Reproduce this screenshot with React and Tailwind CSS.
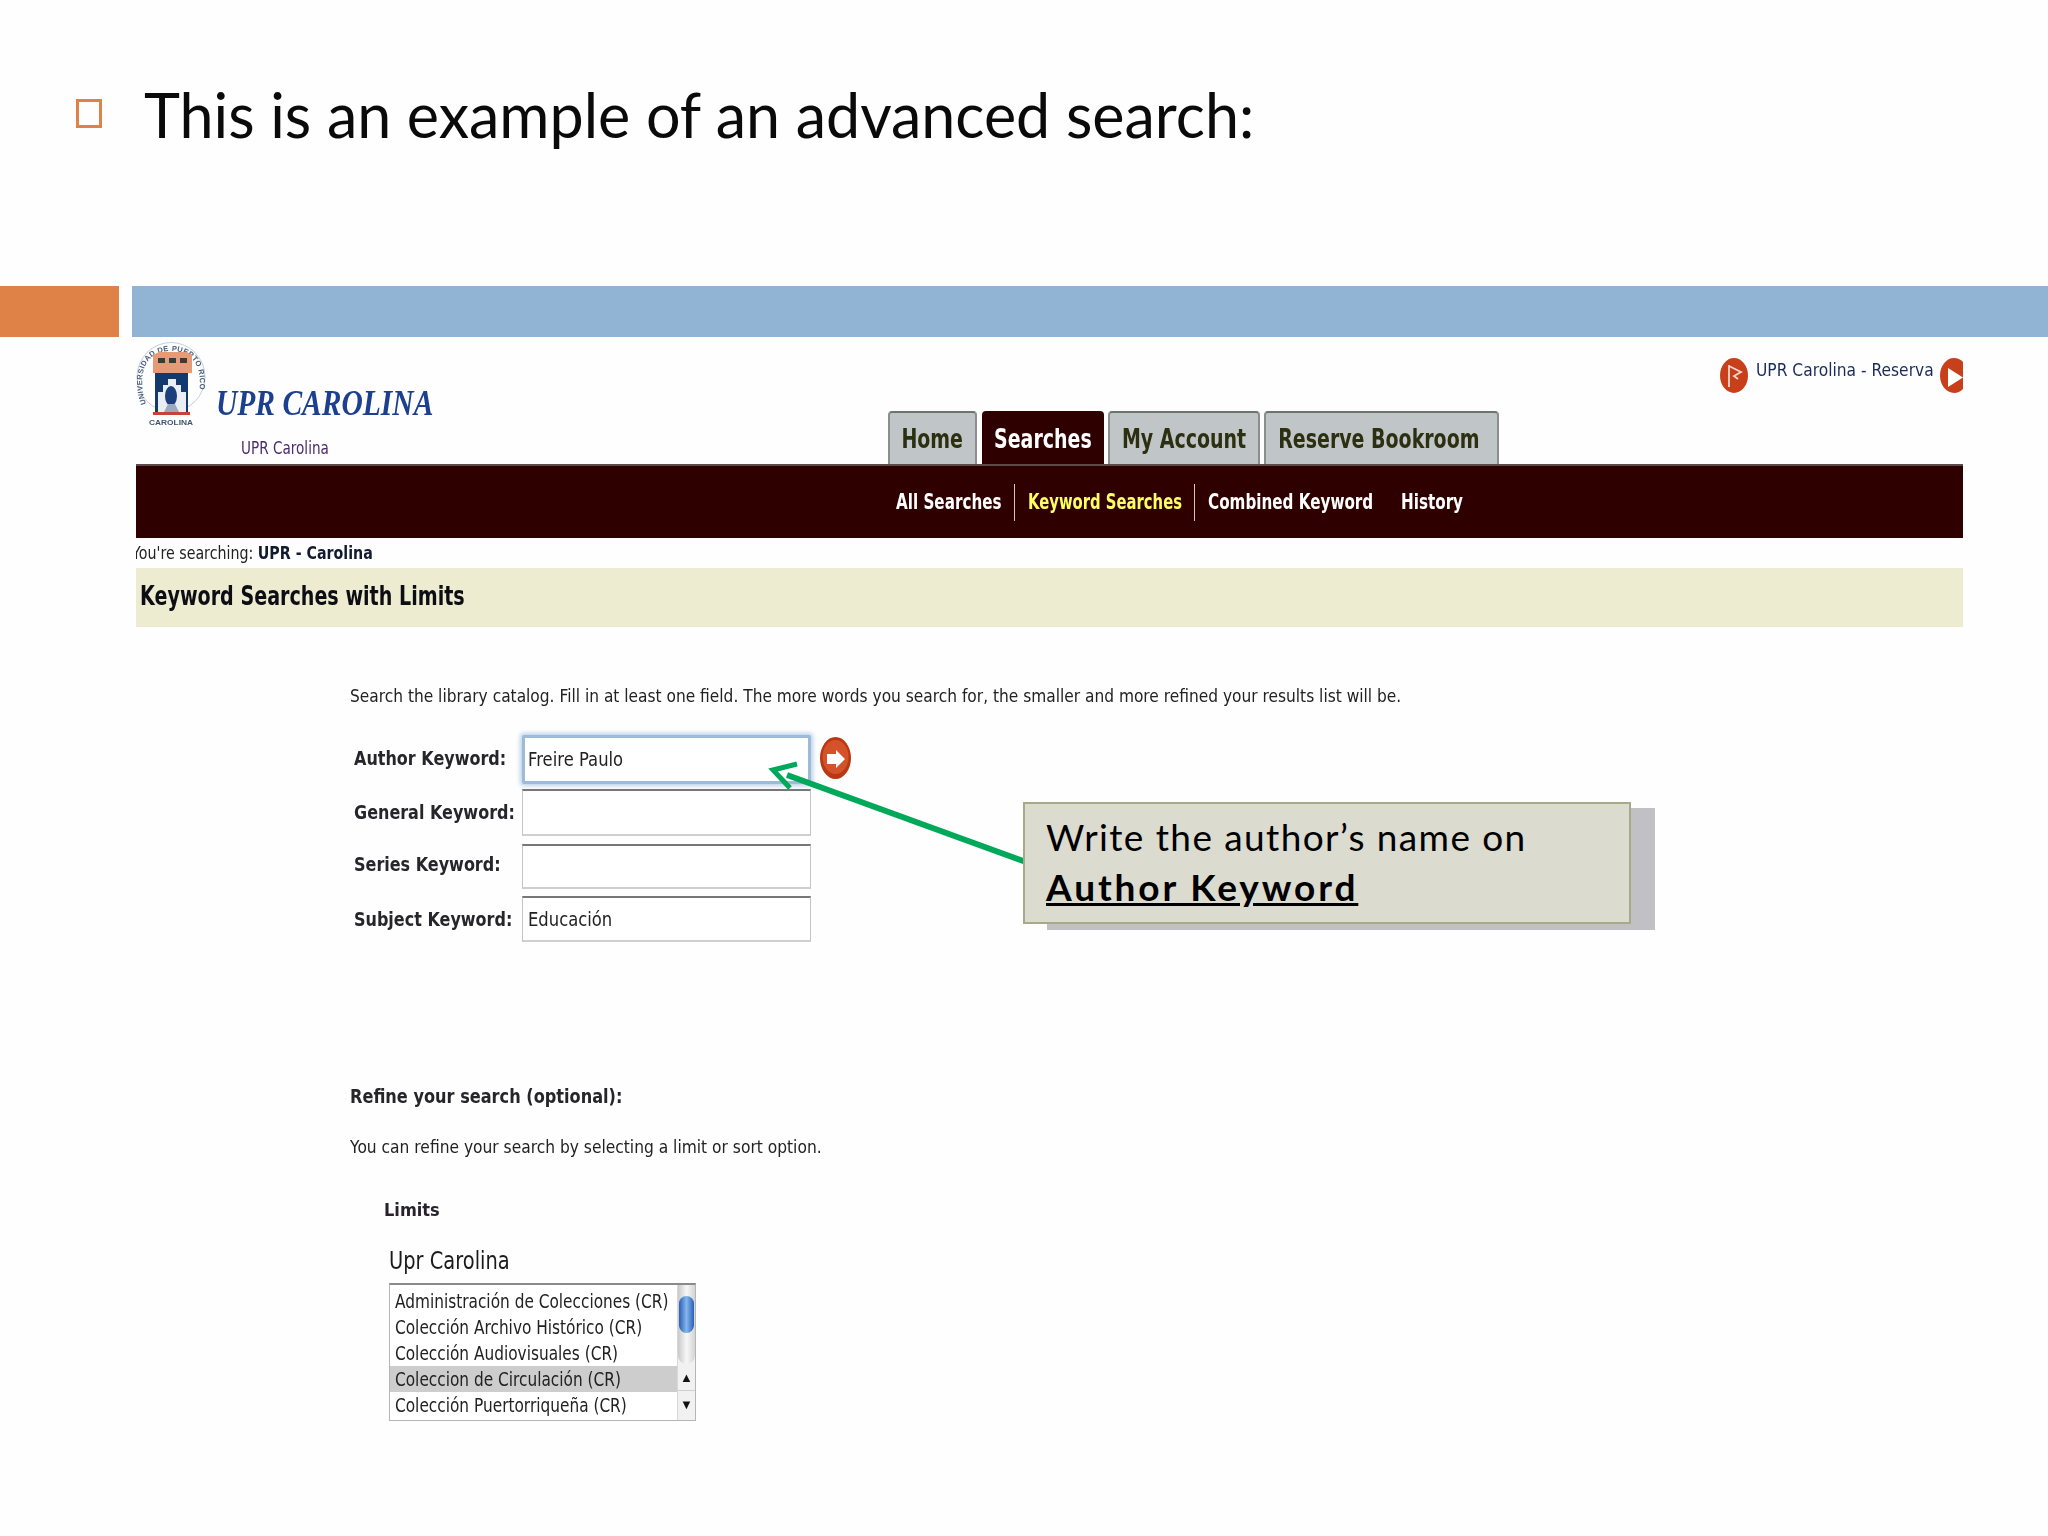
const dv = "[font-family:'DejaVu_Sans',sans-serif]";

function Seal() {
  return (
    <svg width="72" height="92" viewBox="0 0 72 92" className="shrink-0 mt-[5px] -ml-[1px]">
      <defs>
        <path id="ring" d="M11 62 C2 35 8 9 36 9 C64 9 70 35 61 62" fill="none" />
      </defs>
      <ellipse cx="36" cy="35" rx="34" ry="34.500" fill="none" stroke="#8fa2b5" strokeWidth="1" opacity="0.5" />
      <text fontSize="7.500" fontWeight="700" fill="#4a5f7d" fontFamily="Liberation Sans, sans-serif" letterSpacing="0.3">
        <textPath href="#ring">UNIVERSIDAD DE PUERTO RICO</textPath>
      </text>
      <path d="M18 31V13l6-3h28l5 3v18z" fill="#e59a78" />
      <rect x="23" y="16" width="7" height="5" fill="#3a3a3a" />
      <rect x="34" y="16" width="7" height="5" fill="#3a3a3a" />
      <rect x="45" y="16" width="7" height="5" fill="#3a3a3a" />
      <rect x="20" y="31" width="33" height="39" fill="#123a6e" />
      <path d="M23 70V50h5v-7h5v-6h8v6h5v7h5v20z" fill="#e8eef3" />
      <ellipse cx="36" cy="54" rx="6" ry="10" fill="#1c3f7c" />
      <path d="M29 70l4-8h7l4 8z" fill="#9aa9bd" />
      <rect x="18" y="70" width="37" height="3" fill="#c8413a" />
      <text x="36" y="83" textAnchor="middle" fontSize="8" fontWeight="700" fill="#3f5470" fontFamily="Liberation Sans, sans-serif" textLength="44" lengthAdjust="spacingAndGlyphs">CAROLINA</text>
    </svg>
  );
}

function RoundIcon({ kind, className }) {
  return (
    <svg viewBox="0 0 28 35" className={className}>
      <ellipse cx="14" cy="17.5" rx="14" ry="17.5" fill="#c8401a" />
      {kind === "r" ? (
        <path d="M9 7v22M9 8l12 6-7 4 4 3" fill="none" stroke="#f3d9cc" strokeWidth="1.8" />
      ) : (
        <path d="M8 10l15 9.500-15 9.500z" fill="#fff" />
      )}
    </svg>
  );
}

function GoIcon() {
  return (
    <svg viewBox="0 0 31 42" className="w-[31px] h-[42px] ml-[9px] -mt-[3px] shrink-0">
      <ellipse cx="15.500" cy="21" rx="15.500" ry="21" fill="#b93812" />
      <ellipse cx="15.500" cy="20" rx="13" ry="17" fill="#d4512a" />
      <path d="M7 17h9v-4l9 9-9 9v-4H7z" fill="#fff" />
    </svg>
  );
}

function Tab({ w, active, label, pad = "" }) {
  return (
    <div
      className={
        "h-full flex items-center justify-center overflow-hidden rounded-t-[4px] border-t-2 border-x-2 " +
        w + " " + pad + " " +
        (active
          ? "bg-[#2f0000] border-[#2f0000] text-white"
          : "bg-[#c0c5c8] border-t-[#70746f] border-x-[#8b8f8c] text-[#2c3010]")
      }
    >
      <span className={dv + " whitespace-nowrap font-bold text-[26px] leading-none scale-x-[0.73]"}>{label}</span>
    </div>
  );
}

function SubLink({ w, label, yellow, bar }) {
  return (
    <div className={"h-[37px] flex items-center " + w + (bar ? " border-r border-[#d8c8b8]" : "")}>
      <span
        className={
          dv + " whitespace-nowrap font-bold text-[22px] leading-none origin-left " +
          (yellow ? "text-[#ffff66] scale-x-[0.673]" : "text-white scale-x-[0.69]")
        }
      >
        {label}
      </span>
    </div>
  );
}

function Field({ label, value, outer, focus, labelPad }) {
  return (
    <div className={"flex items-center " + outer}>
      <div className={"w-[168px] h-full flex items-center " + labelPad}>
        <span className={dv + " whitespace-nowrap font-bold text-[20px] leading-none origin-left scale-x-[0.8] text-[#26262a]"}>{label}</span>
      </div>
      <div
        className={
          "w-[289px] h-full flex items-center bg-white " +
          (focus
            ? "pl-[3px] pb-[2px] border-[3px] border-[#9dbbd8] rounded-[2px] shadow-[0_0_4px_2px_#bcd2e8]"
            : "pl-[5px] border-t-2 border-t-[#77777a] border-x border-x-[#c4c4c4] border-b-2 border-b-[#cfcfcf]")
        }
      >
        <span className={dv + " whitespace-nowrap text-[20px] leading-none origin-left scale-x-[0.82] text-[#222]"}>{value}</span>
      </div>
      {focus && <GoIcon />}
    </div>
  );
}

const rows = [
  "Administración de Colecciones (CR)",
  "Colección Archivo Histórico (CR)",
  "Colección Audiovisuales (CR)",
  "Coleccion de Circulación (CR)",
  "Colección Puertorriqueña (CR)",
];

export default function App() {
  return (
    <div className="relative w-[2048px] h-[1536px] overflow-hidden bg-[#fefefe] text-black">
      {/* slide title */}
      <div className="h-[286px] flex items-start pl-[76px] pt-[80px]">
        <div className="w-[26px] h-[29px] mt-[19px] border-[3px] border-[#df8248] shrink-0" />
        <h1 className="ml-[42px] [font-family:Lato,sans-serif] text-[61px] leading-[70px] font-normal whitespace-nowrap text-[#0a0a0a]">
          This is an example of an advanced search:
        </h1>
      </div>

      {/* theme bars */}
      <div className="flex h-[51px]">
        <div className="w-[119px] bg-[#df8248]" />
        <div className="ml-[13px] flex-1 bg-[#92b4d4]" />
      </div>

      {/* embedded catalogue page */}
      <div className="ml-[136px] w-[1827px] blur-[0.5px]">
        <header className="flex h-[127px]">
          <div className="flex w-[752px]">
            <Seal />
            <div className="ml-[9px] pt-[48px]">
              <div className="[font-family:'Liberation_Serif',serif] font-bold italic text-[36px] leading-[36px] text-[#1c3f8f] whitespace-nowrap origin-left scale-x-[0.82]">
                UPR CAROLINA
              </div>
              <div className={dv + " ml-[25px] mt-[15px] text-[17px] leading-[24px] text-[#4a2a6a] whitespace-nowrap origin-left scale-x-[0.8]"}>
                UPR Carolina
              </div>
            </div>
          </div>
          <div className="flex-1 flex flex-col">
            <div className="flex justify-end items-start pt-[21px] overflow-hidden">
              <RoundIcon kind="r" className="w-[28px] h-[35px] shrink-0" />
              <div className="w-[184px] ml-[8px] h-[24px] flex items-center">
                <span className={dv + " text-[18px] leading-none whitespace-nowrap text-[#1a2a5a] origin-left scale-x-[0.86]"}>UPR Carolina - Reserva</span>
              </div>
              <div className="w-[23px] h-[35px] overflow-hidden shrink-0">
                <RoundIcon kind="p" className="w-[28px] h-[35px]" />
              </div>
            </div>
            <div className="mt-auto h-[53px] flex">
              <Tab w="w-[89px]" label="Home" />
              <div className="w-[5px]" />
              <Tab w="w-[122px]" active label="Searches" />
              <div className="w-[4px]" />
              <Tab w="w-[152px]" label="My Account" />
              <div className="w-[4px]" />
              <Tab w="w-[235px]" pad="pr-[5px]" label="Reserve Bookroom" />
            </div>
          </div>
        </header>

        <nav className="h-[74px] bg-[#2f0000] border-t-2 border-[#5a4a4a] flex items-center pl-[760px]">
          <SubLink w="w-[119px]" label="All Searches" bar />
          <div className="w-[13px]" />
          <SubLink w="w-[167px]" label="Keyword Searches" yellow bar />
          <div className="w-[13px]" />
          <SubLink w="w-[193px]" label="Combined Keyword" />
          <SubLink w="w-[70px]" label="History" />
        </nav>

        <div className="h-[30px] flex items-center overflow-hidden">
          <span className={dv + " -ml-[4px] text-[18px] leading-none whitespace-nowrap text-[#222] origin-left scale-x-[0.79]"}>
            You're searching: <b className="text-[#111b2e]">UPR - Carolina</b>
          </span>
        </div>

        <div className="h-[59px] bg-[#eeecd0] flex items-center pl-[4px] pb-[3px]">
          <h2 className={dv + " font-bold text-[26px] leading-none whitespace-nowrap text-[#0d0d14] origin-left scale-x-[0.735]"}>
            Keyword Searches with Limits
          </h2>
        </div>

        <div className="pl-[214px]">
          <p className={dv + " mt-[57px] h-[24px] flex items-center text-[18px] leading-none whitespace-nowrap text-[#222] origin-left scale-x-[0.857]"}>
            Search the library catalog. Fill in at least one field. The more words you search for, the smaller and more refined your results list will be.
          </p>

          <div className="mt-[27px] ml-[4px]">
            <Field outer="h-[49px]" labelPad="pb-[3px]" label="Author Keyword:" value="Freire Paulo" focus />
            <Field outer="h-[47px] mt-[5px]" labelPad="pb-[2px]" label="General Keyword:" value="" />
            <Field outer="h-[45px] mt-[8px]" labelPad="pb-[6px]" label="Series Keyword:" value="" />
            <Field outer="h-[46px] mt-[7px]" labelPad="" label="Subject Keyword:" value="Educación" />
          </div>

          <div className={dv + " mt-[142px] h-[24px] flex items-center font-bold text-[19px] leading-none whitespace-nowrap text-[#26262a] origin-left scale-x-[0.85]"}>
            Refine your search (optional):
          </div>
          <p className={dv + " mt-[27px] h-[24px] flex items-center text-[18px] leading-none whitespace-nowrap text-[#222] origin-left scale-x-[0.86]"}>
            You can refine your search by selecting a limit or sort option.
          </p>

          <div className={dv + " ml-[34px] mt-[39px] h-[24px] flex items-center font-bold text-[18px] leading-none text-[#26222e] origin-left scale-x-[0.9]"}>
            Limits
          </div>
          <div className={dv + " ml-[39px] mt-[24px] h-[30px] flex items-center text-[24px] leading-none whitespace-nowrap text-[#1a1a1a] origin-left scale-x-[0.81]"}>
            Upr Carolina
          </div>

          <div className="ml-[39px] mt-[7px] w-[307px] h-[138px] flex border border-[#b5b5b5] border-t-2 border-t-[#8a8a8a] bg-white overflow-hidden">
            <ul className="w-[287px] pt-[3px]">
              {rows.map((r, i) => (
                <li key={r} className={"h-[26px] pl-[5px] flex items-center " + (i === 3 ? "bg-[#cdcdcd]" : "")}>
                  <span className={dv + " text-[19px] leading-none whitespace-nowrap text-[#222] origin-left scale-x-[0.808]"}>{r}</span>
                </li>
              ))}
            </ul>
            <div className="flex-1 flex flex-col bg-[#f1f1f1] border-l border-[#d8d8d8]">
              <div className="h-[79px] rounded-b-[9px] bg-gradient-to-r from-[#c9c9c9] via-[#f7f7f7] to-[#d4d4d4] pt-[11px] px-[1px]">
                <div className="h-[37px] rounded-[8px] bg-gradient-to-r from-[#2a5fb4] via-[#86b6ee] to-[#2a5fb4]" />
              </div>
              <div className="h-[27px] flex items-center justify-center text-[13px] leading-none text-[#111] border-b border-[#cfcfcf]">▲</div>
              <div className="h-[26px] flex items-center justify-center text-[13px] leading-none text-[#111]">▼</div>
            </div>
          </div>
        </div>
      </div>

      {/* callout drawn over the page */}
      <svg className="absolute left-[750px] top-[750px] w-[290px] h-[125px]" viewBox="750 750 290 125">
        <path d="M1026 862 L787 775" fill="none" stroke="#00a85a" strokeWidth="6" />
        <path d="M797 764 L773 770 L790 788" fill="none" stroke="#00a85a" strokeWidth="5" />
      </svg>
      <div className="absolute left-[1047px] top-[808px] w-[608px] h-[122px] bg-[#c1c0c5]" />
      <div className="absolute left-[1023px] top-[802px] w-[608px] h-[122px] bg-[#dbdbcf] border-2 border-[#a9a98a] pl-[21px] pt-[8px] [font-family:Lato,sans-serif] text-[37px] leading-[50px] text-black">
        <div className="tracking-[1.4px] whitespace-nowrap">Write the author’s name on</div>
        <div className="font-bold underline tracking-[2.9px] whitespace-nowrap">Author Keyword</div>
      </div>
    </div>
  );
}
